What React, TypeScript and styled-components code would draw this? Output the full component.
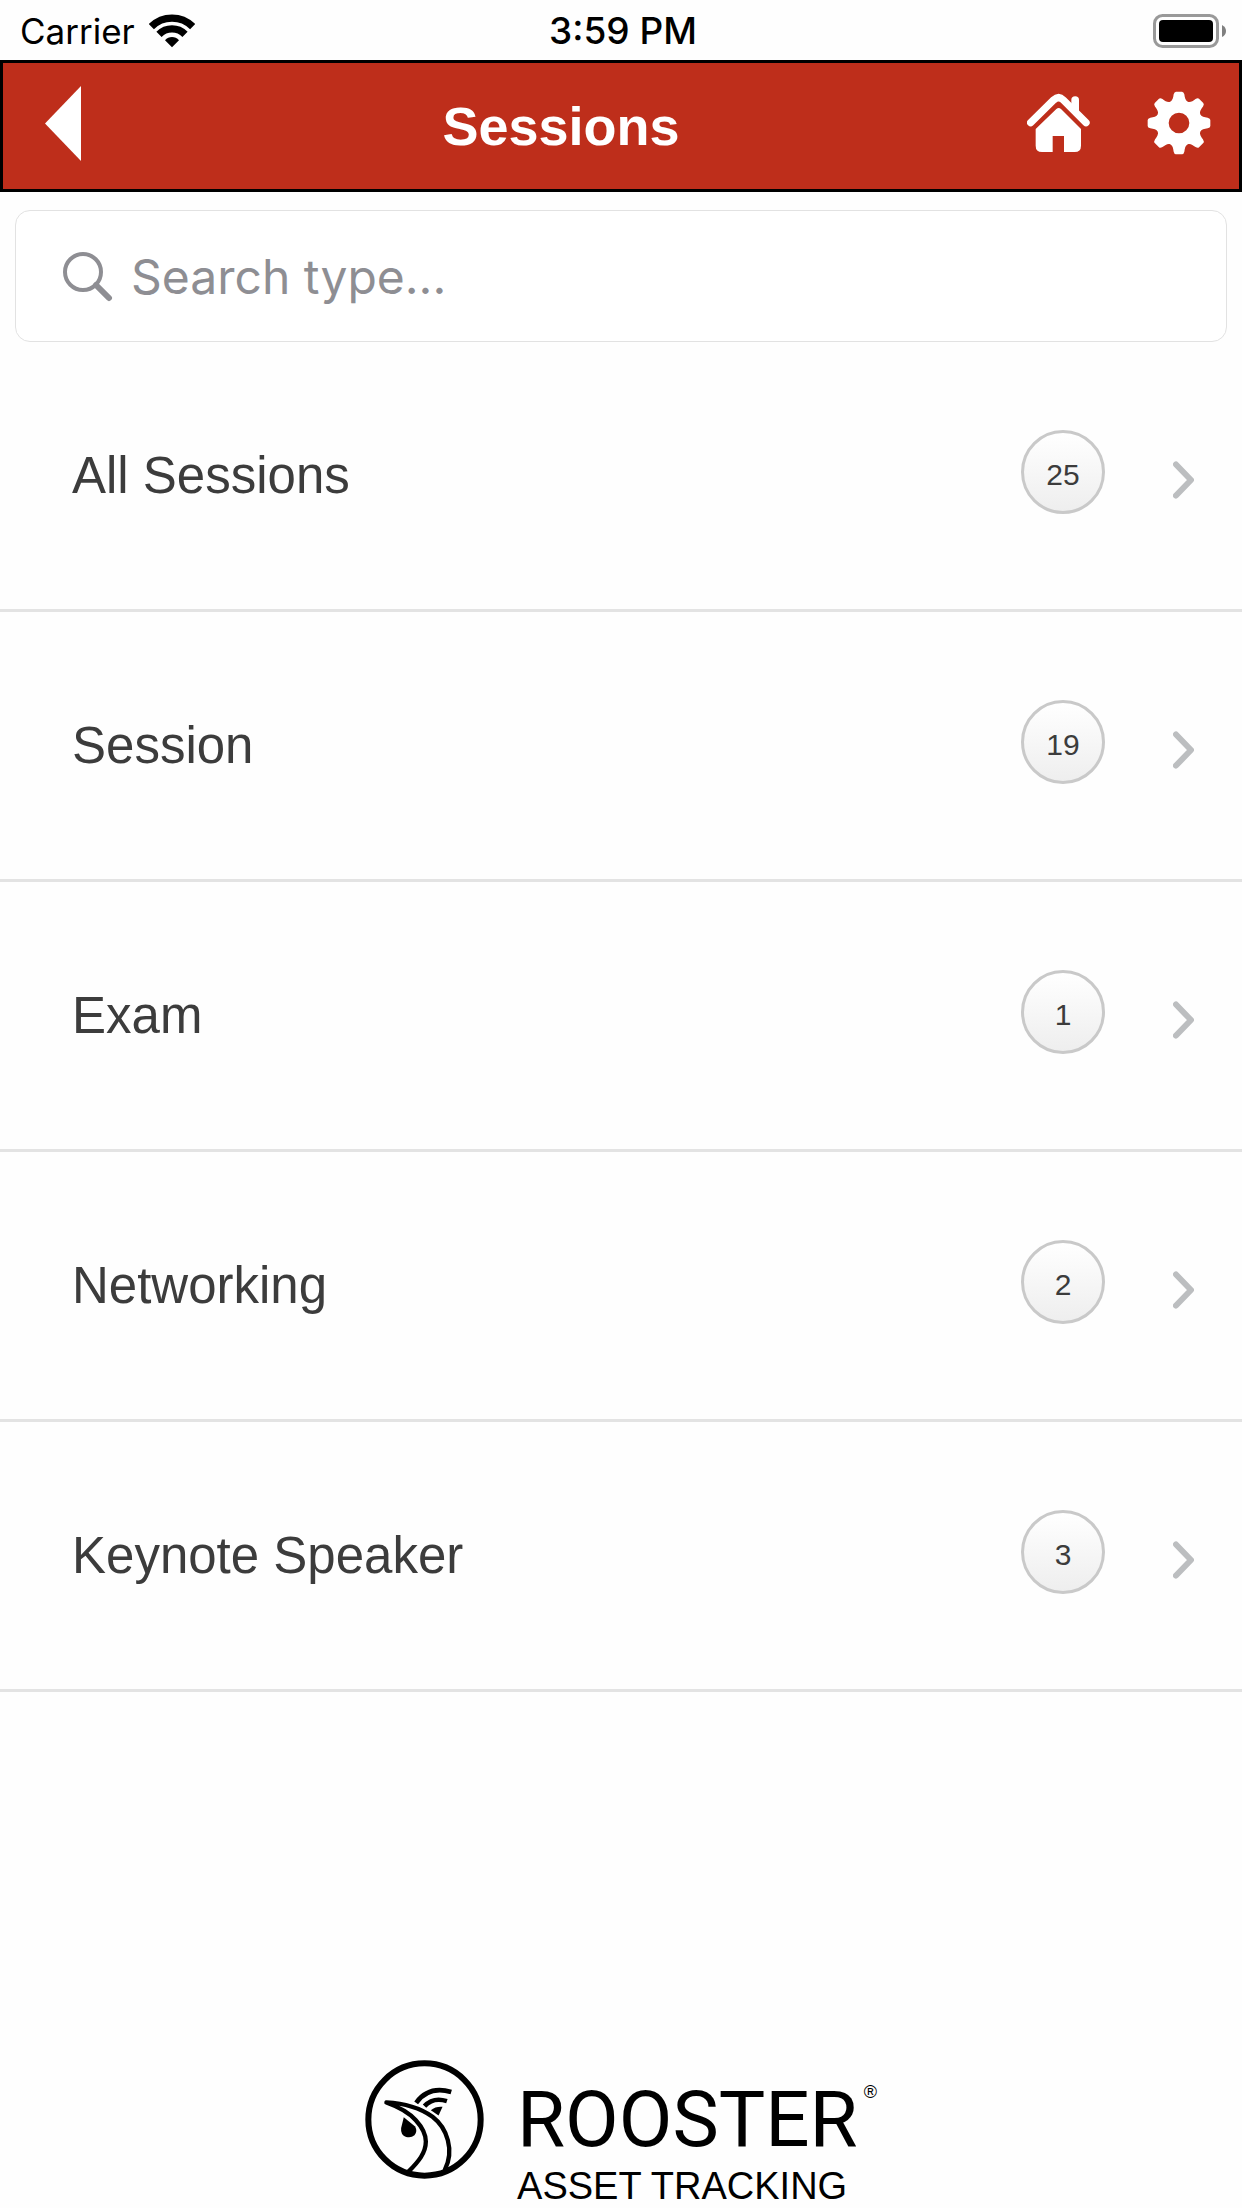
import React from "react";
import styled, { createGlobalStyle } from "styled-components";

const helvetica = `"Liberation Sans", Arial, sans-serif`;
const system = `Inter, "Liberation Sans", sans-serif`;

const GlobalStyle = createGlobalStyle`
  *, *::before, *::after { box-sizing: border-box; }
  body { margin: 0; background: #fefefe; font-family: ${helvetica}; color: #3c3c3c; }
  svg { display: block; flex: none; }
`;

const Page = styled.div`
  display: flex;
  flex-direction: column;
  min-height: 100vh;
`;

const StatusBar = styled.div`
  display: grid;
  grid-template-columns: 1fr auto 1fr;
  align-items: center;
  height: 60px;
  padding: 0 16px 0 20px;
  font-family: ${system};
  font-size: 35px;
  line-height: 62px;
  color: #000;
`;

const Carrier = styled.div`
  display: flex;
  align-items: center;
  gap: 14px;
`;

const Time = styled.time`
  font-size: 37px;
  font-weight: 500;
`;

const BatterySlot = styled.div`
  justify-self: end;
`;

const Header = styled.header`
  display: grid;
  grid-template-columns: 120px 1fr 120px 120px;
  height: 132px;
  border: 3px solid #000;
  background: #be2e1b;
  color: #fff;
`;

const HeaderButton = styled.button`
  display: flex;
  align-items: center;
  justify-content: center;
  padding: 0 0 6px;
  border: 0;
  background: none;
  color: inherit;
  cursor: pointer;
`;

const Title = styled.h1`
  margin: 0;
  text-align: center;
  font-size: 54px;
  line-height: 126px;
  font-weight: 700;
`;

const SearchBox = styled.label`
  display: flex;
  align-items: center;
  gap: 18px;
  height: 132px;
  margin: 18px 15px 0;
  padding: 2px 47px 0;
  border: 1px solid #e2e2e2;
  border-radius: 15px;
  background: #fff;
  color: #8e8e93;
`;

const SearchInput = styled.input`
  flex: 1;
  min-width: 0;
  padding: 0;
  border: 0;
  outline: 0;
  background: none;
  font-family: ${system};
  font-size: 48px;
  line-height: 60px;
  color: #3c3c3c;

  &::placeholder {
    color: #8e8e93;
    opacity: 1;
  }
`;

const List = styled.ul`
  margin: 0;
  padding: 0;
  list-style: none;
`;

const Row = styled.a`
  display: flex;
  align-items: center;
  height: 270px;
  padding: 0 48px 0 72px;
  border-bottom: 3px solid #e3e3e3;
  color: inherit;
  text-decoration: none;
`;

const RowLabel = styled.span`
  flex: 1;
  font-size: 51px;
  line-height: 60px;
`;

const Badge = styled.span`
  width: 84px;
  height: 84px;
  margin: 0 68px 8px 0;
  padding-top: 6px;
  border: 3px solid #c9c9c9;
  border-radius: 50%;
  background: linear-gradient(#fff, #eee);
  text-align: center;
  font-size: 30px;
  line-height: 72px;
`;

const ChevronSlot = styled.span`
  padding-top: 8px;
`;

const Footer = styled.footer`
  display: flex;
  justify-content: center;
  gap: 33px;
  margin-top: auto;
  color: #000;
`;

const Wordmark = styled.div`
  display: flex;
  flex-direction: column;
  padding-top: 16px;
`;

const BrandName = styled.div`
  display: flex;
  gap: 6px;
  font-family: Roboto, sans-serif;
  font-size: 78px;
  line-height: 88px;
`;

const Registered = styled.sup`
  font-family: ${helvetica};
  font-size: 18px;
  line-height: 32px;
`;

const Tagline = styled.div`
  font-size: 38px;
  line-height: 44px;
`;

const WifiIcon = () => (
  <svg width="46" height="34" viewBox="447 38 138 102" aria-hidden="true">
    <g fill="none" stroke="#000" strokeWidth="22">
      <path d="M454 76A88 88 0 0 1 578 76" />
      <path d="M477 99A55 55 0 0 1 555 99" />
    </g>
    <path d="M516 138L495 117Q504 107 516 107Q528 107 537 117Z" />
  </svg>
);

const BatteryIcon = () => (
  <svg width="73" height="34" viewBox="0 0 73 34" aria-hidden="true">
    <rect x="1.5" y="1.5" width="63" height="31" rx="8" fill="none" stroke="#999" strokeWidth="3" />
    <rect x="6" y="6" width="54" height="22" rx="4" />
    <path d="M69 11Q73 13 73 17Q73 21 69 23Z" fill="#808080" />
  </svg>
);

const BackIcon = () => (
  <svg width="36" height="75" viewBox="0 0 36 75" fill="currentColor" aria-hidden="true">
    <path d="M36 0V75L0 37.5Z" />
  </svg>
);

const HomeIcon = () => (
  <svg width="64" height="60" viewBox="142 278 192 180" fill="currentColor" aria-hidden="true">
    <path
      d="M153 367L222 299Q237 285 251 299L319 367"
      fill="none"
      stroke="currentColor"
      strokeWidth="22"
      strokeLinecap="round"
    />
    <path d="M275 320V299Q275 288 286.500 288Q298 288 298 299V343Z" />
    <path d="M230 326Q237 320 244 326L304 386V436Q304 455 285 455H253V407H219V455H187Q168 455 168 436V386Z" />
  </svg>
);

// One tooth pointing up, drawn from valley to valley; the gear is eight of them.
const tooth: [string, number[]][] = [
  ["C", [-19, -66.8, -17.5, -76, -16, -86]],
  ["Q", [-14, -94, -9, -94]],
  ["L", [9, -94]],
  ["Q", [14, -94, 16, -86]],
  ["C", [17.5, -76, 19, -66.8, 26.4, -63.7]],
];

const gearPath =
  "M-26.4 -63.7" +
  Array.from({ length: 8 }, (_, i) => {
    const a = (i * Math.PI) / 4;
    return tooth
      .map(([cmd, pts]) => {
        const out: string[] = [];
        for (let k = 0; k < pts.length; k += 2) {
          const x = pts[k] * Math.cos(a) - pts[k + 1] * Math.sin(a);
          const y = pts[k] * Math.sin(a) + pts[k + 1] * Math.cos(a);
          out.push(`${x.toFixed(1)} ${y.toFixed(1)}`);
        }
        return cmd + out.join(" ");
      })
      .join("");
  }).join("") +
  "ZM-31 0A31 31 0 1 0 31 0A31 31 0 1 0 -31 0Z";

const GearIcon = () => (
  <svg width="64" height="64" viewBox="-96 -96 192 192" aria-hidden="true">
    <path d={gearPath} fill="currentColor" fillRule="evenodd" />
  </svg>
);

const SearchIcon = () => (
  <svg width="50" height="50" viewBox="0 0 50 50" fill="none" stroke="currentColor" aria-hidden="true">
    <circle cx="20" cy="20" r="18" strokeWidth="4" />
    <path d="M33 33L46 46" strokeWidth="6" strokeLinecap="round" />
  </svg>
);

const ChevronIcon = () => (
  <svg width="21" height="38" viewBox="0 0 21 38" fill="none" aria-hidden="true">
    <path d="M3 3.5L18 19L3 34.5" stroke="#bcbec0" strokeWidth="6" strokeLinecap="round" strokeLinejoin="round" />
  </svg>
);

const Emblem = () => (
  <svg width="119" height="119" viewBox="54 60 356 356" role="img" aria-label="Rooster emblem">
    <circle cx="232" cy="238" r="168" fill="none" stroke="#000" strokeWidth="18" />
    <g fill="none" stroke="#000" strokeWidth="13" strokeLinecap="round" strokeLinejoin="round">
      <path d="M184 394C214 364 236 338 236 304C236 284 228 264 206 240C188 220 160 202 118 187C180 190 225 208 256 230C300 264 322 330 293 388" />
    </g>
    <g fill="none" stroke="#000" strokeWidth="14">
      <path d="M207 188Q245 136 312 156" />
      <path d="M232 198Q258 170 299 183" />
    </g>
    <path d="M251 210Q266 198 286 200L274 226Z" />
    <path d="M170 231L204 259Q212 274 202 285Q192 294 177 290Q160 284 162 264Z" />
  </svg>
);

const sessionTypes = [
  { name: "All Sessions", count: 25 },
  { name: "Session", count: 19 },
  { name: "Exam", count: 1 },
  { name: "Networking", count: 2 },
  { name: "Keynote Speaker", count: 3 },
];

export default function App() {
  return (
    <Page>
      <GlobalStyle />
      <StatusBar>
        <Carrier>
          Carrier
          <WifiIcon />
        </Carrier>
        <Time>3:59 PM</Time>
        <BatterySlot>
          <BatteryIcon />
        </BatterySlot>
      </StatusBar>
      <Header>
        <HeaderButton type="button" aria-label="Back">
          <BackIcon />
        </HeaderButton>
        <Title>Sessions</Title>
        <HeaderButton type="button" aria-label="Home">
          <HomeIcon />
        </HeaderButton>
        <HeaderButton type="button" aria-label="Settings">
          <GearIcon />
        </HeaderButton>
      </Header>
      <main>
        <SearchBox>
          <SearchIcon />
          <SearchInput type="text" placeholder="Search type..." aria-label="Search type" />
        </SearchBox>
        <List>
          {sessionTypes.map(({ name, count }) => (
            <li key={name}>
              <Row href="#">
                <RowLabel>{name}</RowLabel>
                <Badge>{count}</Badge>
                <ChevronSlot>
                  <ChevronIcon />
                </ChevronSlot>
              </Row>
            </li>
          ))}
        </List>
      </main>
      <Footer>
        <Emblem />
        <Wordmark>
          <BrandName>
            ROOSTER
            <Registered>®</Registered>
          </BrandName>
          <Tagline>ASSET TRACKING</Tagline>
        </Wordmark>
      </Footer>
    </Page>
  );
}
